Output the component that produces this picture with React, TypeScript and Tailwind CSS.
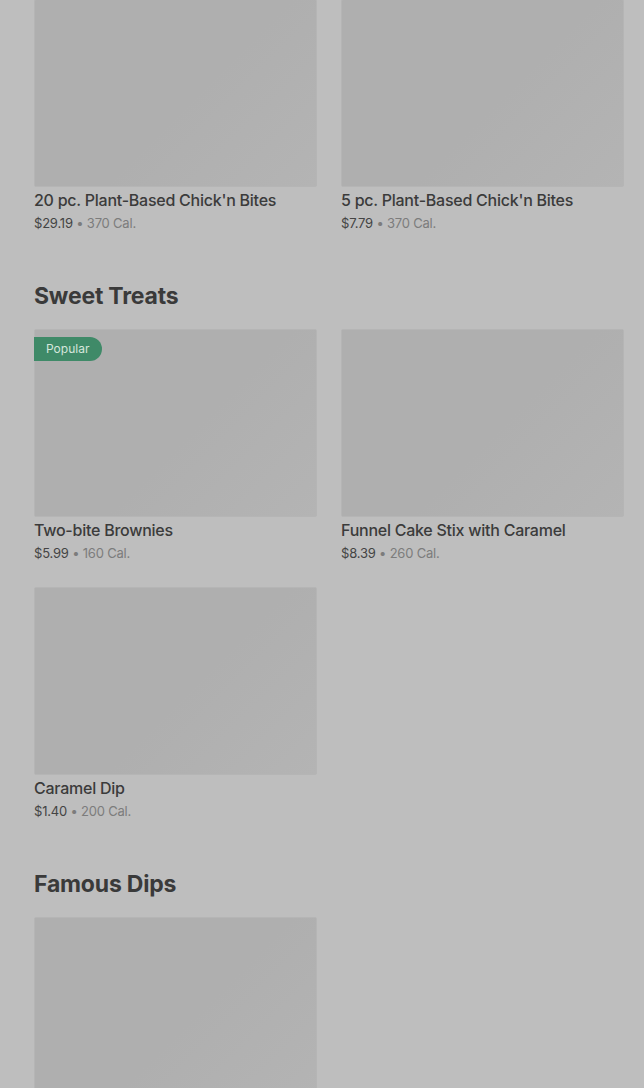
import React from "react";

type Item = { name: string; price: string; cal: string; popular?: boolean; imageOnly?: boolean };

function Card({ item }: { item: Item }) {
  return (
    <div className="flex flex-col">
      <div className="relative h-[188px] w-full rounded-[2px] border border-[#b5b5b5] bg-[linear-gradient(135deg,#afafaf_0%,#afafaf_55%,#b4b4b4_100%)]">
        {item.popular && (
          <div className="absolute left-[-1px] top-[7px] flex h-[24px] items-center rounded-r-full bg-[#3f8a68] pl-[12px] pr-[13px] text-[12px] leading-none text-[#d6e6dc]">
            Popular
          </div>
        )}
      </div>
      {!item.imageOnly && (
        <>
          <div className="mt-[3px] text-[16px] font-medium leading-[20px] tracking-[-0.25px] text-[#3b3b3b]">{item.name}</div>
          <div className="mt-[4px] text-[13px] leading-[18px] tracking-[-0.2px]">
            <span className="text-[#444444]">{item.price}</span>
            <span className="text-[#7c7c7c]"> • {item.cal}</span>
          </div>
        </>
      )}
    </div>
  );
}

function Grid({ items }: { items: Item[] }) {
  return (
    <div className="grid grid-cols-2 gap-x-[24px] gap-y-[25px]">
      {items.map((it) => (
        <Card key={it.name} item={it} />
      ))}
    </div>
  );
}

function Section({ title, items }: { title: string; items: Item[] }) {
  return (
    <div className="mt-[50px] flex flex-col">
      <h2 className="text-[23px] font-bold leading-[28px] tracking-[-0.2px] text-[#3a3a3a]">{title}</h2>
      <div className="mt-[19px]">
        <Grid items={items} />
      </div>
    </div>
  );
}

export default function App() {
  return (
    <div
      className="h-[1088px] w-[644px] overflow-hidden bg-[#bebebe] pl-[34px] pr-[20px]"
      style={{ fontFamily: "Inter, 'Liberation Sans', sans-serif" }}
    >
      <div className="-mt-[1px]">
        <Grid
          items={[
            { name: "20 pc. Plant-Based Chick'n Bites", price: "$29.19", cal: "370 Cal." },
            { name: "5 pc. Plant-Based Chick'n Bites", price: "$7.79", cal: "370 Cal." },
          ]}
        />
      </div>
      <Section
        title="Sweet Treats"
        items={[
          { name: "Two-bite Brownies", price: "$5.99", cal: "160 Cal.", popular: true },
          { name: "Funnel Cake Stix with Caramel", price: "$8.39", cal: "260 Cal." },
          { name: "Caramel Dip", price: "$1.40", cal: "200 Cal." },
        ]}
      />
      <Section
        title="Famous Dips"
        items={[{ name: "dip-1", price: "", cal: "", imageOnly: true }]}
      />
    </div>
  );
}
